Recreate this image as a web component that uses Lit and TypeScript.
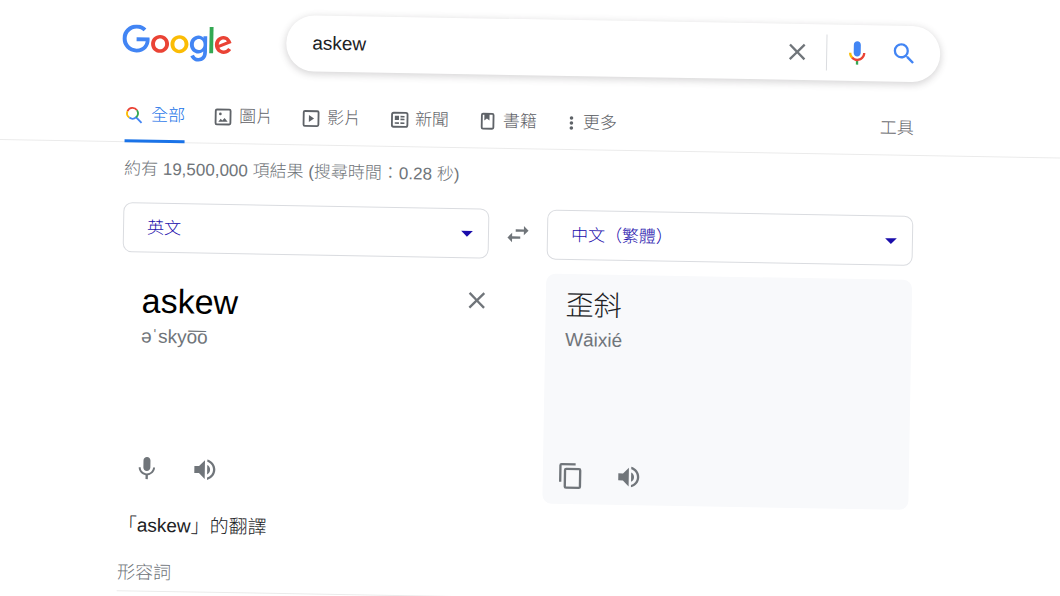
import { LitElement, html, css, svg } from "lit";
import { customElement, property, state } from "lit/decorators.js";
import { classMap } from "lit/directives/class-map.js";

const icons = {
  close: svg`<path d="M19 6.41L17.59 5 12 10.59 6.41 5 5 6.41 10.59 12 5 17.59 6.41 19 12 13.41 17.59 19 19 17.59 13.41 12z"/>`,
  voice: svg`
    <path fill="#4285f4" d="M12 15c1.66 0 3-1.31 3-2.97V5.01C15 3.35 13.66 2 12 2S9 3.34 9 5.01v7.02C9 13.69 10.34 15 12 15z"/>
    <path fill="#34a853" d="M11 18.08h2V22h-2z"/>
    <path fill="#fbbc05" d="M7.05 16.87C5.78 15.54 5 14.04 5 12h2c0 1.45.56 2.42 1.47 3.38v.32l-1.15 1.18z"/>
    <path fill="#ea4335" d="M12 16.93a4.97 5.25 0 0 1-3.54-1.55l-1.41 1.49C8.31 18.21 10.07 19 12 19c3.87 0 6.99-2.92 6.99-7H17c0 2.92-2.24 4.93-5 4.93z"/>`,
  search: svg`<path d="M15.5 14h-.79l-.28-.27A6.47 6.47 0 0 0 16 9.5 6.5 6.5 0 1 0 9.5 16c1.61 0 3.09-.59 4.23-1.57l.27.28v.79l5 4.99L20.49 19zm-6 0C7.01 14 5 11.99 5 9.5S7.01 5 9.5 5 14 7.01 14 9.5 11.99 14 9.5 14z"/>`,
  all: svg`
    <g fill="none" stroke-width="2.2">
      <path stroke="#ea4335" d="M2.9 7A6.6 6.6 0 0 1 14.3 5.9"/>
      <path stroke="#fbbc05" d="M2.9 7A6.6 6.6 0 0 0 5.2 14.8"/>
      <path stroke="#4285f4" d="M5.2 14.8A6.6 6.6 0 0 0 13.4 14.3L20 20.9"/>
      <path stroke="#34a853" d="M14.3 5.9A6.6 6.6 0 0 1 13.4 14.3"/>
    </g>`,
  images: svg`
    <rect x="3.2" y="3.2" width="17.8" height="17.8" rx="1.5" fill="none" stroke="currentColor" stroke-width="2.2"/>
    <path d="M6.5 17.8l2.8-3.4 2 2 2.6-3 3.8 4.4z"/><circle cx="8.8" cy="8.5" r="1.6"/>`,
  videos: svg`
    <rect x="3.2" y="3.2" width="17.8" height="17.8" rx="1.5" fill="none" stroke="currentColor" stroke-width="2.2"/>
    <path d="M9.5 7.8v8.6l6.2-4.3z"/>`,
  news: svg`
    <rect x="3.6" y="3.4" width="18.6" height="16.8" rx="2" fill="none" stroke="currentColor" stroke-width="2.2"/>
    <path d="M7 7h5v5H7zM13.8 7h4.8v1.9h-4.8zM13.8 10.3h4.8v1.9h-4.8zM7 14.8h5v1.9H7zM13.8 14.8h4.8v1.9h-4.8z"/>`,
  books: svg`
    <rect x="5.8" y="2.8" width="14" height="17.8" rx="1.5" fill="none" stroke="currentColor" stroke-width="2.2"/>
    <path d="M8.8 2.6H15v8.2l-3.1-2.3-3.1 2.3z"/>`,
  more: svg`<circle cx="13" cy="2" r="3.6"/><circle cx="13" cy="12" r="3.6"/><circle cx="13" cy="22" r="3.6"/>`,
  swap: svg`<path d="M6.99 11L3 15l3.99 4v-3H14v-2H6.99v-3zM21 9l-3.99-4v3H10v2h7.01v3L21 9z"/>`,
  down: svg`<path d="M7 10l5 5 5-5z"/>`,
  mic: svg`<path d="M12 14c1.66 0 3-1.34 3-3V5c0-1.66-1.34-3-3-3S9 3.34 9 5v6c0 1.66 1.34 3 3 3zm5.3-3c0 3-2.54 5.1-5.3 5.1S6.7 14 6.7 11H5c0 3.41 2.72 6.23 6 6.72V21h2v-3.28c3.28-.48 6-3.3 6-6.72z"/>`,
  speaker: svg`<path d="M3 9v6h4l5 5V4L7 9zm13.5 3A4.5 4.5 0 0 0 14 7.97v8.05A4.47 4.47 0 0 0 16.5 12zM14 3.23v2.06c2.89.86 5 3.54 5 6.71s-2.11 5.85-5 6.71v2.06c4.01-.91 7-4.49 7-8.77s-2.99-7.86-7-8.77z"/>`,
  copy: svg`<path d="M16 1H4a2 2 0 0 0-2 2v14h2V3h12zm3 4H8a2 2 0 0 0-2 2v14a2 2 0 0 0 2 2h11a2 2 0 0 0 2-2V7a2 2 0 0 0-2-2zm0 16H8V7h11z"/>`,
};

type IconName = keyof typeof icons;

@customElement("ui-icon")
export class UiIcon extends LitElement {
  @property() name: IconName = "search";

  static styles = css`
    :host {
      display: block;
      flex: none;
      width: 28px;
      height: 28px;
    }
    .glyph {
      display: block;
      width: 100%;
      height: 100%;
      overflow: visible;
      fill: currentColor;
    }
  `;

  render() {
    return html`<svg class="glyph" viewBox="0 0 24 24" aria-hidden="true">${icons[this.name]}</svg>`;
  }
}

const tabs: { icon: IconName; label: string }[] = [
  { icon: "all", label: "全部" },
  { icon: "images", label: "圖片" },
  { icon: "videos", label: "影片" },
  { icon: "news", label: "新聞" },
  { icon: "books", label: "書籍" },
  { icon: "more", label: "更多" },
];

@customElement("app-root")
export class AppRoot extends LitElement {
  @state() private query = "askew";

  static styles = css`
    :host {
      display: block;
      min-height: 100vh;
      max-height: 100vh;
      overflow: hidden;
      background: #fff;
      color: #202124;
      font-family: "Liberation Sans", "Noto Sans CJK TC", sans-serif;
      font-weight: 300;
    }
    * {
      box-sizing: border-box;
    }
    button,
    input,
    select {
      font: inherit;
      color: inherit;
      background: none;
      border: 0;
      margin: 0;
      padding: 0;
      outline: none;
    }
    button {
      display: block;
      cursor: pointer;
    }
    a {
      color: inherit;
      text-decoration: none;
    }
    .page {
      transform: rotate(1deg);
      transform-origin: 0 0;
    }
    .header {
      display: flex;
      align-items: flex-start;
      padding: 10px 24px 0 123px;
    }
    .logo {
      flex: none;
      width: 110px;
      margin: 12px 54px 0 0;
    }
    .logo svg {
      display: block;
      width: 100%;
    }
    .searchbox {
      flex: 1;
      max-width: 654px;
      display: flex;
      align-items: center;
      height: 56px;
      padding: 0 22px 0 26px;
      border-radius: 28px;
      background: #fff;
      box-shadow: 0 2px 7px 1px rgba(64, 60, 67, 0.2);
    }
    .query {
      flex: 1;
      min-width: 0;
      font-size: 19px;
      line-height: 24px;
    }
    .clear {
      color: #70757a;
    }
    .rule {
      width: 1px;
      height: 36px;
      margin: 0 16px 0 15px;
      background: #dadce0;
    }
    .go {
      margin-left: 19px;
      color: #4285f4;
    }
    .nav {
      display: flex;
      margin: 0 -40px 0 0;
      padding: 37px 40px 0 127px;
      border-bottom: 1px solid #ebebeb;
      color: #5f6368;
      font-size: 17px;
      line-height: 20px;
    }
    .tabs {
      flex: 1;
      max-width: 789px;
      display: flex;
      gap: 28px;
    }
    .tab {
      display: flex;
      gap: 6px;
      padding-bottom: 14px;
      border-bottom: 3px solid transparent;
      margin-bottom: -1px;
      white-space: nowrap;
    }
    .tab.on {
      color: #1a73e8;
      border-color: #1a73e8;
    }
    .tab ui-icon {
      width: 20px;
      height: 20px;
    }
    .tab.menu ui-icon {
      width: 12px;
    }
    .tools {
      margin-left: auto;
    }
    .results {
      max-width: 941px;
      padding: 17px 24px 0 127px;
    }
    .stats {
      color: #70757a;
      font-size: 17px;
      line-height: 20px;
    }
    .translator {
      display: grid;
      grid-template-columns: 1fr 58px 1fr;
      row-gap: 14px;
      margin-top: 23px;
    }
    .language {
      display: grid;
      align-items: center;
      height: 50px;
      border: 1px solid #dadce0;
      border-radius: 9px;
      color: #1a0dab;
    }
    .language select {
      grid-area: 1 / 1;
      width: 100%;
      height: 100%;
      padding: 0 44px 0 23px;
      appearance: none;
      font-size: 17px;
    }
    .language ui-icon {
      grid-area: 1 / 1;
      justify-self: end;
      margin-right: 7px;
      pointer-events: none;
    }
    .swap {
      place-self: center;
      color: #70757a;
    }
    .panel {
      display: flex;
      flex-direction: column;
      min-height: 230px;
      padding: 14px 20px;
      border-radius: 9px;
    }
    .target {
      grid-column: 3;
      background: #f8f9fb;
    }
    .row {
      display: flex;
      justify-content: space-between;
      align-items: flex-start;
      margin-right: -23px;
      color: #000;
    }
    .word {
      font-size: 34px;
      line-height: 40px;
    }
    .meaning {
      font-size: 28px;
      line-height: 36px;
      color: #202124;
    }
    .sound {
      margin-top: 4px;
      color: #70757a;
      font-size: 19px;
      line-height: 24px;
    }
    .actions {
      display: flex;
      gap: 30px;
      margin-top: auto;
      margin-left: -6px;
      color: #70757a;
    }
    .heading {
      margin: 17px 0 0;
      font-size: 19px;
      font-weight: 300;
      line-height: 24px;
    }
    .class {
      margin: 23px 0 0;
      padding-bottom: 6px;
      border-bottom: 1px solid #ebebeb;
      color: #70757a;
      font-size: 18px;
      font-weight: 300;
      line-height: 24px;
    }
  `;

  private onInput(e: Event) {
    this.query = (e.target as HTMLInputElement).value;
  }

  private renderLogo() {
    return html`<a class="logo" href="#" aria-label="Google">
      <svg viewBox="0 0 272 92" aria-hidden="true">
        <path fill="#ea4335" d="M115.75 47.18c0 12.77-9.99 22.18-22.25 22.18s-22.25-9.41-22.25-22.18C71.25 34.32 81.24 25 93.5 25s22.25 9.32 22.25 22.18zm-9.74 0c0-7.98-5.79-13.44-12.51-13.44S80.99 39.2 80.99 47.18c0 7.9 5.79 13.44 12.51 13.44s12.51-5.55 12.51-13.44z"/>
        <path fill="#fbbc05" d="M163.75 47.18c0 12.77-9.99 22.18-22.25 22.18s-22.25-9.41-22.25-22.18c0-12.85 9.99-22.18 22.25-22.18s22.25 9.32 22.25 22.18zm-9.74 0c0-7.98-5.79-13.44-12.51-13.44s-12.51 5.46-12.51 13.44c0 7.9 5.79 13.44 12.51 13.44s12.51-5.55 12.51-13.44z"/>
        <path fill="#4285f4" d="M209.75 26.34v39.82c0 16.38-9.66 23.07-21.08 23.07-10.75 0-17.22-7.19-19.66-13.07l8.48-3.53c1.51 3.61 5.21 7.87 11.17 7.87 7.31 0 11.84-4.51 11.84-13v-3.19h-.34c-2.18 2.69-6.38 5.04-11.68 5.04-11.09 0-21.25-9.66-21.25-22.09 0-12.52 10.16-22.26 21.25-22.26 5.29 0 9.49 2.35 11.68 4.96h.34v-3.61h9.25zm-8.56 20.92c0-7.81-5.21-13.52-11.84-13.52-6.72 0-12.35 5.71-12.35 13.52 0 7.73 5.63 13.36 12.35 13.36 6.63 0 11.84-5.63 11.84-13.36z"/>
        <path fill="#34a853" d="M225 3v65h-9.5V3h9.5z"/>
        <path fill="#ea4335" d="M262.02 54.48l7.56 5.04c-2.44 3.61-8.32 9.83-18.48 9.83-12.6 0-22.01-9.74-22.01-22.18 0-13.19 9.49-22.18 20.92-22.18 11.51 0 17.14 9.16 18.98 14.11l1.01 2.52-29.65 12.28c2.27 4.45 5.8 6.72 10.75 6.72 4.96 0 8.4-2.44 10.92-6.14zm-23.27-7.98l19.82-8.23c-1.09-2.77-4.37-4.7-8.23-4.7-4.95 0-11.84 4.37-11.59 12.93z"/>
        <path fill="#4285f4" d="M35.29 41.41V32H67c.31 1.64.47 3.58.47 5.68 0 7.06-1.93 15.79-8.15 22.01-6.05 6.3-13.78 9.66-24.02 9.66C16.32 69.35.36 53.89.36 34.91.36 15.93 16.32.47 35.3.47c10.5 0 17.98 4.12 23.6 9.49l-6.64 6.64c-4.03-3.78-9.49-6.72-16.97-6.72-13.86 0-24.7 11.17-24.7 25.03 0 13.86 10.84 25.03 24.7 25.03 8.99 0 14.11-3.61 17.39-6.89 2.66-2.66 4.41-6.46 5.1-11.65l-22.49.01z"/>
      </svg>
    </a>`;
  }

  render() {
    return html`
      <div class="page">
        <header class="header">
          ${this.renderLogo()}
          <form class="searchbox" role="search" @submit=${(e: Event) => e.preventDefault()}>
            <input class="query" type="text" aria-label="搜尋" .value=${this.query} @input=${this.onInput} />
            <button class="clear" type="button" aria-label="清除" @click=${() => (this.query = "")}>
              <ui-icon name="close"></ui-icon>
            </button>
            <span class="rule"></span>
            <button type="button" aria-label="語音搜尋"><ui-icon name="voice"></ui-icon></button>
            <button class="go" type="submit" aria-label="搜尋"><ui-icon name="search"></ui-icon></button>
          </form>
        </header>

        <nav class="nav">
          <div class="tabs">
            ${tabs.map(
              (tab, i) => html`<a class=${classMap({ tab: true, on: i === 0, menu: tab.icon === "more" })} href="#">
                <ui-icon name=${tab.icon}></ui-icon><span>${tab.label}</span>
              </a>`
            )}
            <a class="tools" href="#">工具</a>
          </div>
        </nav>

        <main class="results">
          <div class="stats">約有 19,500,000 項結果 (搜尋時間：0.28 秒)</div>

          <section class="translator">
            <div class="language">
              <select aria-label="來源語言"><option>英文</option></select>
              <ui-icon name="down"></ui-icon>
            </div>
            <button class="swap" type="button" aria-label="交換語言"><ui-icon name="swap"></ui-icon></button>
            <div class="language">
              <select aria-label="目標語言"><option>中文（繁體）</option></select>
              <ui-icon name="down"></ui-icon>
            </div>

            <div class="panel">
              <div class="row">
                <span class="word">askew</span>
                <button class="clear" type="button" aria-label="清除文字"><ui-icon name="close"></ui-icon></button>
              </div>
              <div class="sound">əˈskyo͞o</div>
              <div class="actions">
                <button type="button" aria-label="語音輸入"><ui-icon name="mic"></ui-icon></button>
                <button type="button" aria-label="聆聽"><ui-icon name="speaker"></ui-icon></button>
              </div>
            </div>
            <div class="panel target">
              <div class="meaning">歪斜</div>
              <div class="sound">Wāixié</div>
              <div class="actions">
                <button type="button" aria-label="複製"><ui-icon name="copy"></ui-icon></button>
                <button type="button" aria-label="聆聽譯文"><ui-icon name="speaker"></ui-icon></button>
              </div>
            </div>
          </section>

          <h2 class="heading">「askew」的翻譯</h2>
          <h3 class="class">形容詞</h3>
        </main>
      </div>
    `;
  }
}
